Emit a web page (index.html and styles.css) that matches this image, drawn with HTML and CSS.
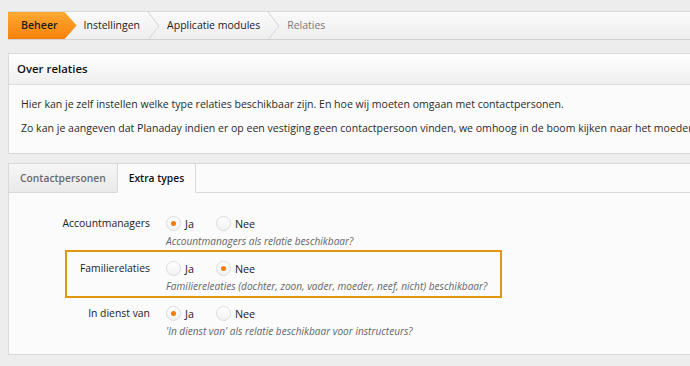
FILE: index.html
```html
<!DOCTYPE html>
<html lang="nl">
<head>
    <meta charset="UTF-8">
    <meta name="viewport" content="width=device-width, initial-scale=1.0">
    <title>Relaties</title>
    <link rel="stylesheet" href="styles.css">
</head>
<body>
    <div class="page">
        <div class="breadcrumb">
            <span class="crumb crumb-first">Beheer</span>
            <span class="crumb">Instellingen</span>
            <svg class="chevron" width="13" height="28" viewBox="0 0 13 28"><polyline points="1,0 12,14 1,28" fill="none" stroke="#d4d4d4" stroke-width="1"/></svg>
            <span class="crumb">Applicatie modules</span>
            <svg class="chevron" width="13" height="28" viewBox="0 0 13 28"><polyline points="1,0 12,14 1,28" fill="none" stroke="#d4d4d4" stroke-width="1"/></svg>
            <span class="crumb crumb-current">Relaties</span>
        </div>

        <div class="panel">
            <div class="panel-header">Over relaties</div>
            <div class="panel-body">
                <p>Hier kan je zelf instellen welke type relaties beschikbaar zijn. En hoe wij moeten omgaan met contactpersonen.</p>
                <p>Zo kan je aangeven dat Planaday indien er op een vestiging geen contactpersoon vinden, we omhoog in de boom kijken naar het moederbedrijf.</p>
            </div>
        </div>

        <div class="panel">
            <div class="tabs">
                <span class="tab">Contactpersonen</span>
                <span class="tab tab-active">Extra types</span>
                <span class="tab-fill"></span>
            </div>
            <div class="form">
                <div class="row">
                    <div class="label">Accountmanagers</div>
                    <div class="field">
                        <div class="options">
                            <span class="radio checked"></span><span class="option">Ja</span>
                            <span class="radio"></span><span class="option">Nee</span>
                        </div>
                        <div class="help">Accountmanagers als relatie beschikbaar?</div>
                    </div>
                </div>
                <div class="row row-highlight">
                    <div class="label">Familierelaties</div>
                    <div class="field">
                        <div class="options">
                            <span class="radio"></span><span class="option">Ja</span>
                            <span class="radio checked"></span><span class="option">Nee</span>
                        </div>
                        <div class="help">Familiereleaties (dochter, zoon, vader, moeder, neef, nicht) beschikbaar?</div>
                    </div>
                </div>
                <div class="row">
                    <div class="label">In dienst van</div>
                    <div class="field">
                        <div class="options">
                            <span class="radio checked"></span><span class="option">Ja</span>
                            <span class="radio"></span><span class="option">Nee</span>
                        </div>
                        <div class="help">'In dienst van' als relatie beschikbaar voor instructeurs?</div>
                    </div>
                </div>
            </div>
        </div>
    </div>
</body>
</html>
```

FILE: styles.css
```css
html, body {
    overflow: hidden;
}
body {
    font-family: "Open Sans", Arial, sans-serif;
    font-size: 10.5px;
    color: #222;
    margin: 0;
    padding: 0;
    background-color: #ededed;
}
.page {
    width: 900px;
    padding: 11px 0 0 8px;
}
.breadcrumb {
    display: flex;
    align-items: center;
    height: 27px;
    border-top: 1px solid #dadada;
    border-bottom: 1px solid #d2d2d2;
    background: linear-gradient(#fafafa, #eeeeee);
    margin-bottom: 13px;
}
.crumb {
    padding: 0 7px;
    line-height: 27px;
    font-size: 10.5px;
    white-space: nowrap;
}
.crumb-first {
    background: linear-gradient(#fda933, #f6820c);
    font-weight: 600;
    font-size: 10.6px;
    color: #1a1a1a;
    padding: 0 19px 0 13px;
    clip-path: polygon(0 0, calc(100% - 12px) 0, 100% 50%, calc(100% - 12px) 100%, 0 100%);
}
.crumb-current {
    color: #7a7a7a;
}
.chevron {
    display: block;
    flex: none;
}
.panel {
    background-color: #fbfbfb;
    border: 1px solid #d9d9d9;
    margin-bottom: 9px;
}
.panel-header {
    height: 30px;
    line-height: 30px;
    padding: 0 8px;
    font-size: 11.4px;
    font-weight: 600;
    color: #111;
    background: linear-gradient(#ffffff, #efefef);
    border-bottom: 1px solid #dcdcdc;
}
.panel-body {
    padding: 7px 12px 13px;
}
.panel-body p {
    margin: 0;
    line-height: 24px;
    font-size: 10.55px;
    white-space: nowrap;
    color: #2a2a2a;
}
.tabs {
    display: flex;
    height: 29px;
}
.tab {
    line-height: 29px;
    padding: 0 11px;
    font-size: 10.3px;
    font-weight: 600;
    color: #6a6a6a;
    background: linear-gradient(#f6f6f6, #e9e9e9);
    border-bottom: 1px solid #d9d9d9;
}
.tab-active {
    color: #111;
    background: #fbfbfb;
    border-left: 1px solid #d9d9d9;
    border-right: 1px solid #d9d9d9;
    border-bottom-color: transparent;
}
.tab-fill {
    flex: 1;
    border-bottom: 1px solid #d9d9d9;
}
.form {
    padding: 12px 0 14px 56px;
}
.row {
    display: flex;
    width: 433px;
    border: 2px solid transparent;
    padding: 6px 0 2px;
    margin-bottom: -3px;
}
.row-highlight {
    border-color: #e1960f;
}
.label {
    flex: none;
    width: 100px;
    margin-left: -17px;
    text-align: right;
    font-size: 10.4px;
    line-height: 20px;
    white-space: nowrap;
    color: #222;
}
.field {
    margin-left: 16px;
}
.options {
    display: flex;
    align-items: center;
    height: 20px;
}
.radio {
    width: 13px;
    height: 13px;
    border: 1px solid #dcdcdc;
    border-radius: 50%;
    background: linear-gradient(#ffffff, #f2f2f2);
    position: relative;
}
.radio.checked::after {
    content: "";
    position: absolute;
    left: 4px;
    top: 4px;
    width: 5px;
    height: 5px;
    border-radius: 50%;
    background-color: #f27c06;
}
.option {
    margin: 0 22px 0 4px;
    font-size: 10.8px;
}
.help {
    font-style: italic;
    color: #666;
    font-size: 10.1px;
    line-height: 16px;
    white-space: nowrap;
}
```
